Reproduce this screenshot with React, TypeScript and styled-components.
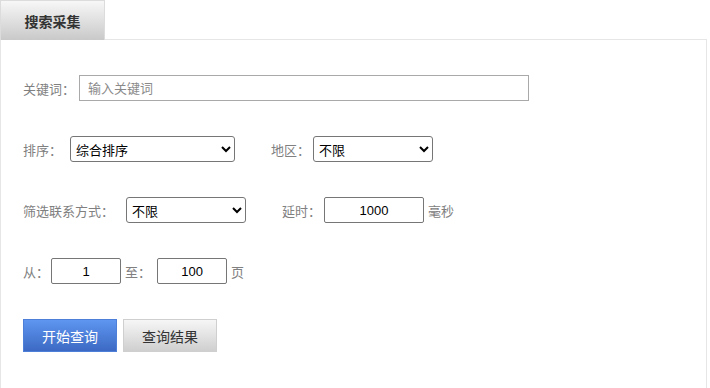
import * as React from 'react';
import styled, { createGlobalStyle } from 'styled-components';

const GlobalStyle = createGlobalStyle`
    body {
        margin: 0;
        background: #fff;
        font-family: "Liberation Sans", "Noto Sans CJK SC", sans-serif;
        font-size: 13px;
    }
`;

const Page = styled.div`
    width: 707px;
`;
const TabBar = styled.div`
    display: flex;
    position: relative;
    z-index: 1;
    margin-bottom: -1px;
`;
const Tab = styled.div`
    width: 105px;
    height: 40px;
    box-sizing: border-box;
    border: 1px solid #dcdcdc;
    border-bottom: none;
    background: linear-gradient(#f7f7f7, #c9c9c9);
    display: flex;
    align-items: center;
    justify-content: center;
    font-family: "Noto Sans CJK SC", sans-serif;
    font-size: 14px;
    font-weight: bold;
    color: #333;
`;
const Panel = styled.div`
    border: 1px solid #e6e6e6;
    height: 360px;
    padding: 35px 0 0 22px;
    display: flex;
    flex-direction: column;
    gap: 35px;
`;
const Row = styled.div`
    display: flex;
    align-items: center;
    height: 26px;
`;
const Label = styled.span<{ $gap: number; $lead?: number }>`
    font-family: "Noto Sans CJK SC", sans-serif;
    font-size: 13px;
    color: #808080;
    margin-left: ${p => p.$lead ?? 0}px;
    margin-right: ${p => p.$gap}px;
    white-space: nowrap;
`;
const TextInput = styled.input<{ $w: number; $soft?: boolean }>`
    width: ${p => p.$w}px;
    height: 26px;
    box-sizing: border-box;
    border: 1px solid ${p => (p.$soft ? '#a9a9a9' : '#767676')};
    border-radius: ${p => (p.$soft ? 0 : 2)}px;
    padding: 0 8px;
    font-family: "Liberation Sans", "Noto Sans CJK SC", sans-serif;
    font-size: 13px;
    color: #000;
    text-align: ${p => (p.$soft ? 'left' : 'center')};
    outline: none;
    &::placeholder {
        color: #8a8a8a;
        font-family: "Noto Sans CJK SC", sans-serif;
    }
`;
const Select = styled.select<{ $w: number }>`
    width: ${p => p.$w}px;
    height: 26px;
    box-sizing: border-box;
    border: 1px solid #767676;
    border-radius: 3px;
    background: #fff;
    font-family: "Noto Sans CJK SC", sans-serif;
    font-size: 13px;
    color: #000;
    padding: 0 0 0 1px;
`;
const Actions = styled.div`
    display: flex;
    gap: 6px;
`;
const Button = styled.button<{ $primary?: boolean }>`
    width: 94px;
    height: 33px;
    box-sizing: border-box;
    border: 1px solid ${p => (p.$primary ? '#4d7fd8' : '#cfcfcf')};
    background: ${p =>
        p.$primary ? 'linear-gradient(#5e96f0, #3c69c3)' : 'linear-gradient(#f6f6f6, #cfcfcf)'};
    color: ${p => (p.$primary ? '#fff' : '#333')};
    font-family: "Noto Sans CJK SC", sans-serif;
    font-size: 14px;
    padding: 0;
    cursor: pointer;
`;

export default function App() {
    return (
        <Page>
            <GlobalStyle />
            <TabBar>
                <Tab>搜索采集</Tab>
            </TabBar>
            <Panel>
                <Row>
                    <Label $gap={4}>关键词：</Label>
                    <TextInput $w={450} $soft placeholder="输入关键词" />
                </Row>
                <Row>
                    <Label $gap={8}>排序：</Label>
                    <Select $w={165} defaultValue="综合排序">
                        <option>综合排序</option>
                    </Select>
                    <Label $lead={36} $gap={3}>地区：</Label>
                    <Select $w={120} defaultValue="不限">
                        <option>不限</option>
                    </Select>
                </Row>
                <Row>
                    <Label $gap={12}>筛选联系方式：</Label>
                    <Select $w={120} defaultValue="不限">
                        <option>不限</option>
                    </Select>
                    <Label $lead={36} $gap={3}>延时：</Label>
                    <TextInput $w={100} defaultValue="1000" />
                    <Label $lead={4} $gap={0}>毫秒</Label>
                </Row>
                <Row>
                    <Label $gap={2}>从：</Label>
                    <TextInput $w={70} defaultValue="1" />
                    <Label $lead={4} $gap={6}>至：</Label>
                    <TextInput $w={70} defaultValue="100" />
                    <Label $lead={4} $gap={0}>页</Label>
                </Row>
                <Actions>
                    <Button $primary>开始查询</Button>
                    <Button>查询结果</Button>
                </Actions>
            </Panel>
        </Page>
    );
}
